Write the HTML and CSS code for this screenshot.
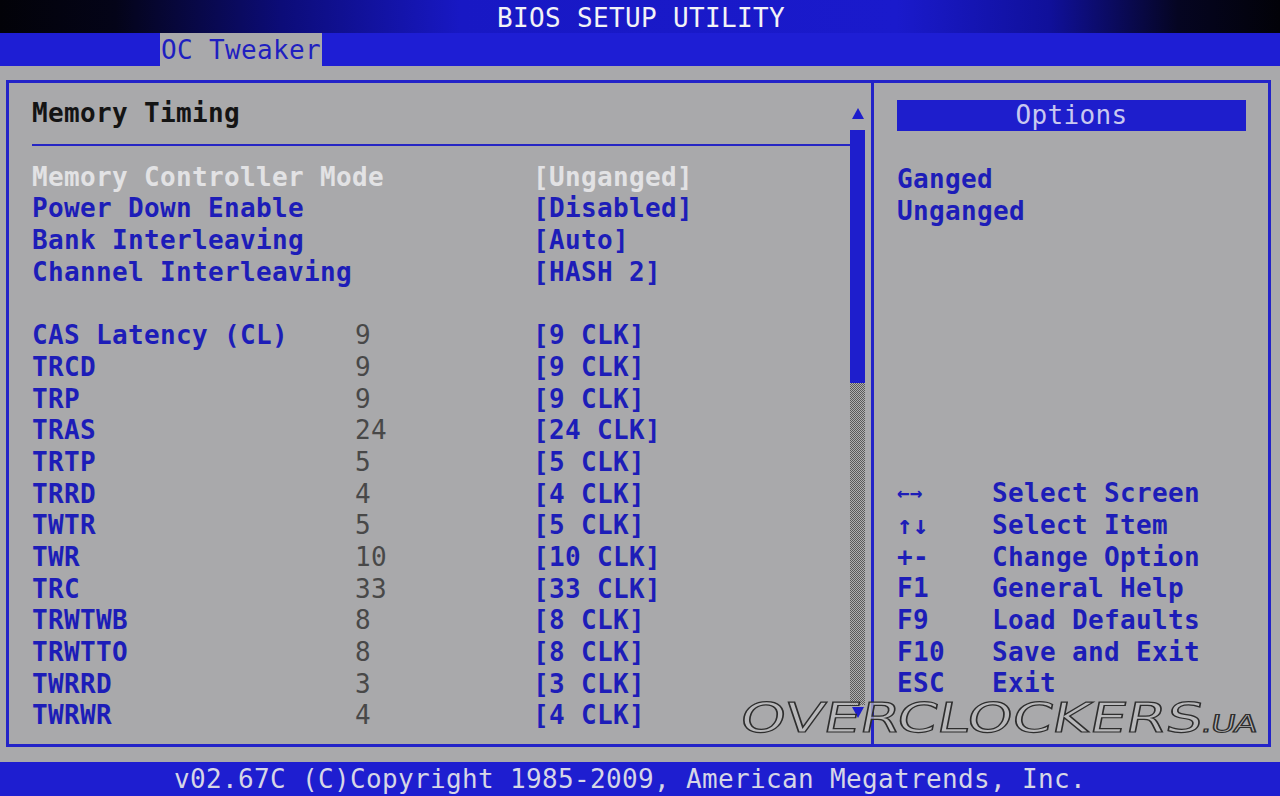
FILE: index.html
```html
<!DOCTYPE html>
<html>
<head>
<meta charset="utf-8">
<link rel="stylesheet" href="styles.css">
</head>
<body>
<div class="screen">
  <header class="topbar"><span class="title">BIOS SETUP UTILITY</span></header>
  <nav class="tabbar"><span class="tab"><span class="tabtext">OC Tweaker</span></span></nav>
  <main class="main">
    <div class="frame">
      <section class="left">
        <div class="content">
          <div class="heading">Memory Timing</div>
          <div class="rule"></div>
          <div class="rows">
            <div class="row sel"><span class="lbl">Memory Controller Mode</span><span class="num"></span><span class="val">[Unganged]</span></div>
            <div class="row"><span class="lbl">Power Down Enable</span><span class="num"></span><span class="val">[Disabled]</span></div>
            <div class="row"><span class="lbl">Bank Interleaving</span><span class="num"></span><span class="val">[Auto]</span></div>
            <div class="row"><span class="lbl">Channel Interleaving</span><span class="num"></span><span class="val">[HASH 2]</span></div>
            <div class="row blank"></div>
            <div class="row"><span class="lbl">CAS Latency (CL)</span><span class="num">9</span><span class="val">[9 CLK]</span></div>
            <div class="row"><span class="lbl">TRCD</span><span class="num">9</span><span class="val">[9 CLK]</span></div>
            <div class="row"><span class="lbl">TRP</span><span class="num">9</span><span class="val">[9 CLK]</span></div>
            <div class="row"><span class="lbl">TRAS</span><span class="num">24</span><span class="val">[24 CLK]</span></div>
            <div class="row"><span class="lbl">TRTP</span><span class="num">5</span><span class="val">[5 CLK]</span></div>
            <div class="row"><span class="lbl">TRRD</span><span class="num">4</span><span class="val">[4 CLK]</span></div>
            <div class="row"><span class="lbl">TWTR</span><span class="num">5</span><span class="val">[5 CLK]</span></div>
            <div class="row"><span class="lbl">TWR</span><span class="num">10</span><span class="val">[10 CLK]</span></div>
            <div class="row"><span class="lbl">TRC</span><span class="num">33</span><span class="val">[33 CLK]</span></div>
            <div class="row"><span class="lbl">TRWTWB</span><span class="num">8</span><span class="val">[8 CLK]</span></div>
            <div class="row"><span class="lbl">TRWTTO</span><span class="num">8</span><span class="val">[8 CLK]</span></div>
            <div class="row"><span class="lbl">TWRRD</span><span class="num">3</span><span class="val">[3 CLK]</span></div>
            <div class="row"><span class="lbl">TWRWR</span><span class="num">4</span><span class="val">[4 CLK]</span></div>
          </div>
        </div>
        <div class="scrollbar">
          <span class="arrow up"></span>
          <span class="thumb"></span>
          <span class="track"></span>
          <span class="arrow down"></span>
        </div>
      </section>
      <section class="right">
        <div class="opthead">Options</div>
        <div class="optlist">
          <div class="opt">Ganged</div>
          <div class="opt">Unganged</div>
        </div>
        <div class="help">
          <div class="hrow"><span class="key arrows">←→</span><span class="desc">Select Screen</span></div>
          <div class="hrow"><span class="key">↑↓</span><span class="desc">Select Item</span></div>
          <div class="hrow"><span class="key">+-</span><span class="desc">Change Option</span></div>
          <div class="hrow"><span class="key">F1</span><span class="desc">General Help</span></div>
          <div class="hrow"><span class="key">F9</span><span class="desc">Load Defaults</span></div>
          <div class="hrow"><span class="key">F10</span><span class="desc">Save and Exit</span></div>
          <div class="hrow"><span class="key">ESC</span><span class="desc">Exit</span></div>
        </div>
      </section>
    </div>
  </main>
  <footer class="footer"><span class="copy">v02.67C (C)Copyright 1985-2009, American Megatrends, Inc.</span></footer>
  <div class="watermark">OVERCLOCKERS<span class="ua">.ua</span></div>
</div>
</body>
</html>
```
FILE: styles.css
```css
* { box-sizing: border-box; }
html, body { margin: 0; padding: 0; }
body {
  width: 1280px;
  height: 796px;
  overflow: hidden;
  background: #a9a9ab;
  font-family: "DejaVu Sans Mono", "Liberation Mono", monospace;
  font-size: 26px;
  letter-spacing: 0.35px;
}
.screen {
  position: relative;
  width: 1280px;
  height: 796px;
  display: flex;
  flex-direction: column;
}
.topbar {
  height: 33px;
  padding-top: 3px;
  display: flex;
  align-items: center;
  justify-content: center;
  background: linear-gradient(to right, #020208 0%, #040418 9%, #0c0c78 22%, #1818c4 36%, #1a1acc 70%, #10109a 82%, #050522 92%, #020208 100%);
}
.title {
  color: #f2f2f6;
  padding-left: 2px;
}
.tabbar {
  height: 33px;
  background: #1e1ed4;
  display: flex;
  padding-left: 160px;
}
.tab {
  width: 162px;
  background: #a9a9ab;
  color: #1f1fc0;
  display: flex;
  align-items: center;
}
.tabtext { margin-left: 1px; }
.main {
  height: 696px;
  padding: 14px 9px 15px 6px;
}
.frame {
  height: 667px;
  border: 3px solid #2323c8;
  display: flex;
}
.left {
  width: 862px;
  display: flex;
  padding-right: 6px;
}
.content {
  flex: 1;
  padding-left: 23px;
  padding-top: 15px;
}
.heading {
  height: 31.7px;
  line-height: 31.7px;
  color: #141414;
  font-weight: bold;
}
.rule {
  height: 2px;
  background: #2626c4;
  margin-top: 14px;
  margin-bottom: 16px;
}
.row {
  display: grid;
  grid-template-columns: 323px 178px auto;
  height: 31.7px;
  line-height: 31.7px;
  white-space: pre;
}
.lbl, .val { color: #1d1db8; font-weight: bold; }
.num { color: #484848; }
.sel .lbl, .sel .val { color: #e2e2e4; }
.scrollbar {
  width: 15px;
  display: flex;
  flex-direction: column;
  align-items: center;
  padding-top: 25px;
}
.arrow {
  width: 0;
  height: 0;
  border-left: 6px solid transparent;
  border-right: 6px solid transparent;
}
.arrow.up { border-bottom: 11px solid #1e1ecc; }
.arrow.down { border-top: 11px solid #1e1ecc; margin-top: 2px; }
.thumb {
  width: 15px;
  height: 253px;
  margin-top: 11px;
  background: #1e1ecc;
}
.track {
  width: 15px;
  height: 322px;
  background-color: #9a9a9a;
  background-image: repeating-conic-gradient(#5a5a5a 0 25%, #b0b0b0 0 50%);
  background-size: 2px 2px;
}
.right {
  flex: 1;
  border-left: 3px solid #2323c8;
  padding: 17px 22px 44px 23px;
  display: flex;
  flex-direction: column;
}
.opthead {
  height: 31px;
  background: #1e1ecc;
  color: #c8c8f0;
  text-align: center;
  line-height: 31px;
}
.optlist { margin-top: 33px; }
.opt {
  height: 31.7px;
  line-height: 31.7px;
  color: #1d1db8;
  font-weight: bold;
}
.help { margin-top: auto; }
.hrow {
  display: flex;
  height: 31.7px;
  line-height: 31.7px;
  color: #1d1db8;
  font-weight: bold;
}
.key { width: 95px; }
.arrows { font-size: 21px; letter-spacing: 0; }
.footer {
  height: 34px;
  background: #1e1ed0;
  display: flex;
  align-items: center;
  justify-content: center;
}
.copy {
  color: #d6d6e6;
  padding-right: 20px;
}
.watermark {
  position: absolute;
  left: 744px;
  top: 702px;
  font-family: "DejaVu Sans", sans-serif;
  font-size: 41px;
  letter-spacing: 0;
  line-height: 32px;
  color: rgba(192, 192, 194, 0.7);
  -webkit-text-stroke: 1.2px #2e2e2e;
  transform-origin: left top;
  transform: scaleX(1.4) skewX(-8deg);
  white-space: nowrap;
}
.ua { font-size: 24px; letter-spacing: -1px; text-transform: uppercase; }
```
